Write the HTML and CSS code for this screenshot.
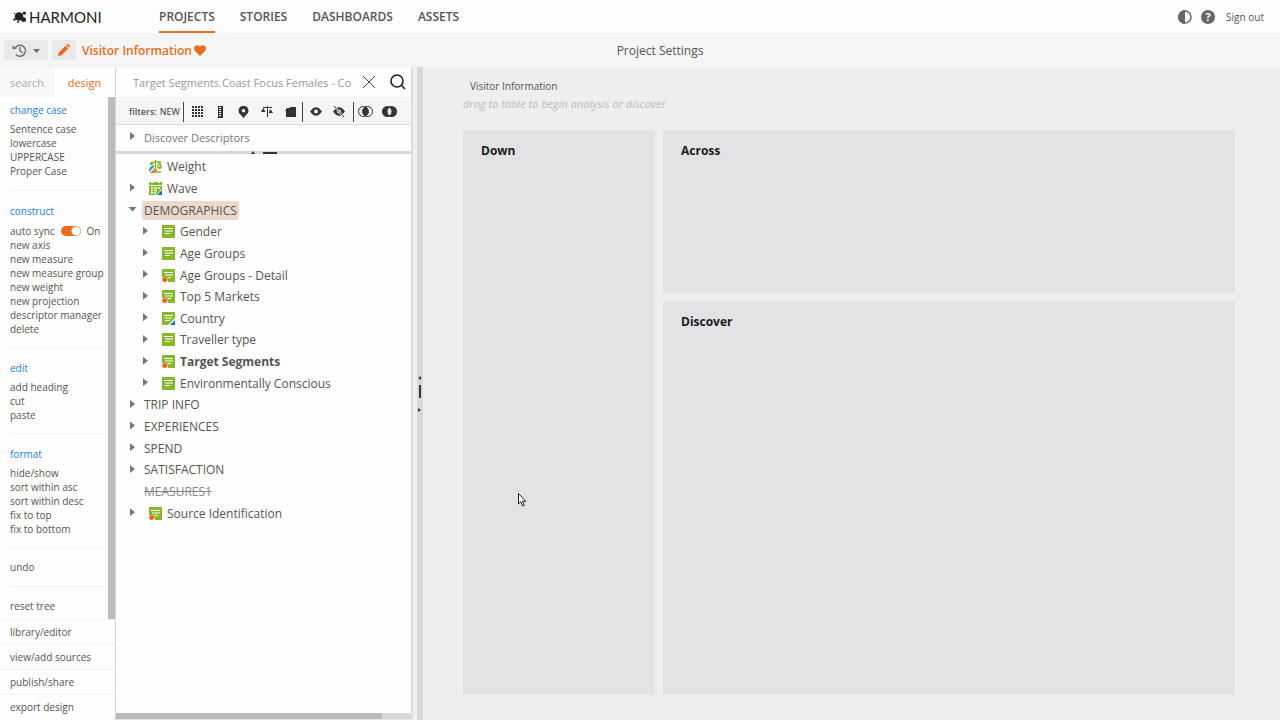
FILE: index.html
```
<!DOCTYPE html>
<html lang="en">
<head>
  <meta charset="UTF-8">
  <meta name="viewport" content="width=device-width, initial-scale=1">
  <title>Harmoni - Project Settings</title>
  <link rel="stylesheet" href="styles.css">
</head>
<body>
  <!-- icons shared by the tree -->
  <svg class="defs" aria-hidden="true">
    <symbol id="axis" viewBox="0 0 13 13">
      <rect width="13" height="13" fill="#86b82c"/>
      <path d="M2 3.500h9M3 6h8M3 8.500h5" stroke="#fff"/>
    </symbol>
    <symbol id="axis-dot" viewBox="0 0 13 13">
      <path d="M0 0h13v13H6L5 8 0 8z" fill="#86b82c"/>
      <path d="M2 3.500h9M3 6h8M6 8.500h3" stroke="#fff"/>
      <circle cx="2.700" cy="10.500" r="2.500" fill="#ee6a16"/>
    </symbol>
    <symbol id="axis-tri" viewBox="0 0 13 13">
      <path d="M0 0h13v6L6 13H0z" fill="#86b82c"/>
      <path d="M2 3.500h9M3 6h7M3 8.500h5" stroke="#fff"/>
      <path d="M13 8v5H8z" fill="#1673c5"/>
    </symbol>
    <symbol id="wave" viewBox="0 0 13 13">
      <path d="M0 0h2v1h2V0h5v1h2V0h2v3H0zM0 4h13v3l-6 6H0z" fill="#86b82c"/>
      <path d="M2 6h2M5 6h3M9 6h2M2 8.500h2M5 8.500h3M2 11h2M5 11h2" stroke="#fff" stroke-width="1.300"/>
      <path d="M13 8v5H8z" fill="#1673c5"/>
    </symbol>
    <symbol id="weight" viewBox="0 0 13 13">
      <path d="M1 3l5.500-1L12 2M6.500 0v10M7 12h5M10.500 2.500L8.500 7M10.500 2.500l2 4.500" fill="none" stroke="#86b82c" stroke-width="1.400"/>
      <path d="M8 6.500h5q-.5 2.500-2.500 2.500T8 6.500zM1 3h3v2H1z" fill="#86b82c"/>
      <path d="M0 9q1-3 5-4v2l-5 5z" fill="#2ba5cf"/>
      <path d="M1 13l5-5v2l-2 3zM4 13l4-4v2l-2 2z" fill="#ee6a16"/>
    </symbol>
  </svg>

  <header class="header">
    <a class="logo" href="#">
      <svg width="14" height="12" viewBox="0 0 14 12" fill="#222" aria-hidden="true">
        <circle cx="6" cy="5.500" r="4.300"/>
        <circle cx="1.500" cy="8.500" r="1.200"/>
        <circle cx="11.300" cy="2.200" r="1.600"/>
        <circle cx="10.700" cy="8.700" r="2.400"/>
        <circle cx="5" cy="11" r="1"/>
        <circle cx="1.500" cy="2.500" r=".7"/>
      </svg>
      <span>HARMONI</span>
    </a>
    <nav class="nav">
      <a class="active" href="#">PROJECTS</a>
      <a href="#">STORIES</a>
      <a href="#">DASHBOARDS</a>
      <a href="#">ASSETS</a>
    </nav>
    <div class="account">
      <button type="button" aria-label="Contrast">
        <svg width="14" height="14" viewBox="0 0 14 14"><circle cx="7" cy="7" r="6" fill="#fff" stroke="#666" stroke-width="1.500"/><path d="M7 0a7 7 0 0 0 0 14z" fill="#666"/></svg>
      </button>
      <button class="help" type="button" aria-label="Help">?</button>
      <a href="#">Sign out</a>
    </div>
  </header>

  <div class="toolbar">
    <div class="toolbar-left">
      <button class="history" type="button" aria-label="History">
        <svg width="28" height="15" viewBox="0 0 28 15" fill="none" stroke="#707070" stroke-width="1.400">
          <path d="M3 5.500A5.500 5.500 0 1 1 4 11.500M8 4v4l3 2"/>
          <path d="M0 2.500l1 4 4-1z" fill="#707070" stroke="none"/>
          <path d="M21 6h7l-3.500 4z" fill="#707070" stroke="none"/>
        </svg>
      </button>
      <button class="edit" type="button" aria-label="Edit">
        <svg width="12" height="12" viewBox="0 0 12 12" fill="#ea6c1e"><path d="M0 12l.8-3.600 6.700-6.700 2.800 2.800-6.700 6.700zM8.300 1L9.300 0h.8L12 1.900v.8l-1 1z"/></svg>
      </button>
      <h1>Visitor Information</h1>
      <svg width="12" height="11" viewBox="0 0 12 11" fill="#ea6c1e" aria-hidden="true"><path d="M6 11L1 6C-2 2.500 2.500-2 6 1.700 9.500-2 14 2.500 11 6z"/></svg>
    </div>
    <span class="toolbar-title">Project Settings</span>
  </div>

  <div class="workspace">
    <aside class="sidebar">
      <div class="tabs">
        <button type="button">search</button>
        <button class="active" type="button">design</button>
      </div>
      <div class="actions">
        <div class="sections">
          <section>
            <h2>change case</h2>
            <button type="button">Sentence case</button>
            <button type="button">lowercase</button>
            <button type="button">UPPERCASE</button>
            <button type="button">Proper Case</button>
          </section>
          <section>
            <h2>construct</h2>
            <label class="switch">auto sync <input type="checkbox" checked> <span>On</span></label>
            <button type="button">new axis</button>
            <button type="button">new measure</button>
            <button type="button">new measure group</button>
            <button type="button">new weight</button>
            <button type="button">new projection</button>
            <button type="button">descriptor manager</button>
            <button type="button">delete</button>
          </section>
          <section>
            <h2>edit</h2>
            <button type="button">add heading</button>
            <button type="button">cut</button>
            <button type="button">paste</button>
          </section>
          <section>
            <h2>format</h2>
            <button type="button">hide/show</button>
            <button type="button">sort within asc</button>
            <button type="button">sort within desc</button>
            <button type="button">fix to top</button>
            <button type="button">fix to bottom</button>
          </section>
          <section>
            <button type="button">undo</button>
          </section>
          <section>
            <button type="button">reset tree</button>
          </section>
        </div>
        <div class="scroll-v"></div>
      </div>
      <div class="links">
        <a href="#">library/editor</a>
        <a href="#">view/add sources</a>
        <a href="#">publish/share</a>
        <a href="#">export design</a>
      </div>
    </aside>

    <section class="explorer">
      <div class="search">
        <input type="text" aria-label="Search" value="Target Segments.Coast Focus Females - Coast Focus">
        <button type="button" aria-label="Clear">
          <svg width="14" height="14" viewBox="0 0 14 14" stroke="#444"><path d="M1 1l12 12M13 1L1 13"/></svg>
        </button>
        <button type="button" aria-label="Search">
          <svg width="16" height="16" viewBox="0 0 16 16" fill="none" stroke="#222" stroke-width="1.600"><circle cx="7" cy="7" r="6"/><path d="M11.300 11.300L15 15"/></svg>
        </button>
      </div>

      <div class="filters">
        <span class="filters-label">filters:</span>
        <button class="new" type="button">NEW</button>
        <div class="group types">
          <button type="button" aria-label="Grid">
            <svg width="11" height="11" viewBox="0 0 11 11" stroke="#333" stroke-width="2" stroke-dasharray="2 1"><path d="M0 1h11M0 4h11M0 7h11M0 10h11"/></svg>
          </button>
          <button type="button" aria-label="Measures">
            <svg width="11" height="12" viewBox="0 0 11 12"><path d="M3 0h5v12H3z" fill="#333"/><path d="M4 1.500h2M4 3.500h2M4 5.500h2M4 7.500h2M4 9.500h2" stroke="#fff"/></svg>
          </button>
          <button type="button" aria-label="Location">
            <svg width="11" height="12" viewBox="0 0 11 12"><path d="M5.500 0a4.700 4.700 0 0 1 3 8.500L5.500 12l-3-3.500A4.700 4.700 0 0 1 5.500 0z" fill="#333"/><circle cx="5.500" cy="4.700" r="1.700" fill="#f5f5f6"/></svg>
          </button>
          <button type="button" aria-label="Weights">
            <svg width="12" height="11" viewBox="0 0 12 11" fill="#333"><path d="M2 1.500h9M6.500 0v11" stroke="#333"/><path d="M0 6l2.300-4L4.500 6zM7.500 7l2-4L12 7z"/></svg>
          </button>
          <button type="button" aria-label="Projections">
            <svg width="11" height="12" viewBox="0 0 11 12" fill="#333"><path d="M1 11V5H0l2-3h3V1h6v10z"/></svg>
          </button>
        </div>
        <div class="group eyes">
          <button type="button" aria-label="Visible">
            <svg width="12" height="9" viewBox="0 0 12 9"><path d="M0 4.500Q6-4 12 4.500 6 13 0 4.500z" fill="#333"/><circle cx="6" cy="4.500" r="2" fill="#f5f5f6"/></svg>
          </button>
          <button type="button" aria-label="Hidden">
            <svg width="12" height="11" viewBox="0 0 12 11"><path d="M0 5.500Q6-3 12 5.500 6 14 0 5.500z" fill="#333"/><circle cx="6" cy="5.500" r="2" fill="#f5f5f6"/><path d="M1 0l10 11" stroke="#f5f5f6" stroke-width="2"/><path d="M1 0l10 11" stroke="#333"/></svg>
          </button>
        </div>
        <div class="group venn">
          <button type="button" aria-label="Intersection">
            <svg width="15" height="11" viewBox="0 0 15 11"><g fill="none" stroke="#333"><circle cx="5.500" cy="5.500" r="5"/><circle cx="9.500" cy="5.500" r="5"/></g><path d="M7.500 1a5 5 0 0 1 0 9 5 5 0 0 1 0-9z" fill="#333"/></svg>
          </button>
          <button type="button" aria-label="Exclusion">
            <svg width="15" height="11" viewBox="0 0 15 11"><circle cx="5.500" cy="5.500" r="5.500" fill="#333"/><circle cx="9.500" cy="5.500" r="5.500" fill="#333"/><path d="M7.500 1.500a5 5 0 0 1 0 8 5 5 0 0 1 0-8z" fill="#f5f5f6"/></svg>
          </button>
        </div>
      </div>

      <div class="descriptors">
        <div class="node"><button class="arrow" type="button" aria-label="Expand"></button><span>Discover Descriptors</span></div>
      </div>
      <div class="split-h">
        <svg width="26" height="3" viewBox="0 0 26 3" fill="#333" aria-hidden="true"><path d="M0 3l2-3 2 3zM12 1h14v2H12z"/></svg>
      </div>

      <ul class="tree">
        <li class="node leaf"><svg><use href="#weight"/></svg><span>Weight</span></li>
        <li class="node"><button class="arrow" type="button" aria-label="Expand"></button><svg><use href="#wave"/></svg><span>Wave</span></li>
        <li class="node"><button class="arrow open" type="button" aria-label="Collapse"></button><span class="selected">DEMOGRAPHICS</span></li>
        <li class="node child"><button class="arrow" type="button" aria-label="Expand"></button><svg><use href="#axis"/></svg><span>Gender</span></li>
        <li class="node child"><button class="arrow" type="button" aria-label="Expand"></button><svg><use href="#axis"/></svg><span>Age Groups</span></li>
        <li class="node child"><button class="arrow" type="button" aria-label="Expand"></button><svg><use href="#axis-dot"/></svg><span>Age Groups - Detail</span></li>
        <li class="node child"><button class="arrow" type="button" aria-label="Expand"></button><svg><use href="#axis-dot"/></svg><span>Top 5 Markets</span></li>
        <li class="node child"><button class="arrow" type="button" aria-label="Expand"></button><svg><use href="#axis-tri"/></svg><span>Country</span></li>
        <li class="node child"><button class="arrow" type="button" aria-label="Expand"></button><svg><use href="#axis"/></svg><span>Traveller type</span></li>
        <li class="node child"><button class="arrow" type="button" aria-label="Expand"></button><svg><use href="#axis-dot"/></svg><span class="bold">Target Segments</span></li>
        <li class="node child"><button class="arrow" type="button" aria-label="Expand"></button><svg><use href="#axis"/></svg><span>Environmentally Conscious</span></li>
        <li class="node"><button class="arrow" type="button" aria-label="Expand"></button><span>TRIP INFO</span></li>
        <li class="node"><button class="arrow" type="button" aria-label="Expand"></button><span>EXPERIENCES</span></li>
        <li class="node"><button class="arrow" type="button" aria-label="Expand"></button><span>SPEND</span></li>
        <li class="node"><button class="arrow" type="button" aria-label="Expand"></button><span>SATISFACTION</span></li>
        <li class="node leaf"><span class="hidden-item">MEASURES1</span></li>
        <li class="node"><button class="arrow" type="button" aria-label="Expand"></button><svg><use href="#axis-dot"/></svg><span>Source Identification</span></li>
      </ul>
      <div class="scroll-h"><div></div></div>
    </section>

    <div class="split-v">
      <svg width="4" height="36" viewBox="0 0 4 36" fill="#333" aria-hidden="true"><path d="M4 0v4L1 2zM2 9h2v13H2zM1 32v4l3-2z"/></svg>
    </div>

    <main class="canvas">
      <h2>Visitor Information</h2>
      <p>drag to table to begin analysis or discover</p>
      <div class="drops">
        <section class="down"><h3>Down</h3></section>
        <section><h3>Across</h3></section>
        <section><h3>Discover</h3></section>
      </div>
    </main>
  </div>

  <svg class="cursor" width="9" height="14" viewBox="0 0 9 14" aria-hidden="true"><path d="M.5.5v10.500l2.300-2.200 1.800 4.200 1.700-.8-1.800-3.900h3.200z" fill="#fff" stroke="#222"/></svg>
</body>
</html>
```
FILE: styles.css
```
* {
  box-sizing: border-box;
}

body {
  margin: 0;
  min-height: 100vh;
  display: flex;
  flex-direction: column;
  background: #eeeeef;
  color: #555;
  font-family: 'Open Sans', 'Noto Sans', sans-serif;
  font-size: 12px;
}

h1, h2, h3, p, ul {
  margin: 0;
  padding: 0;
}

a {
  color: inherit;
  text-decoration: none;
}

button {
  border: 0;
  padding: 0;
  background: none;
  color: inherit;
  font: inherit;
  cursor: pointer;
}

svg {
  display: block;
  flex: none;
}

.defs {
  position: absolute;
  width: 0;
  height: 0;
}

/* header */
.header {
  display: flex;
  height: 33px;
  padding: 0 16px 0 13px;
  background: #fefefe;
}

.logo {
  display: flex;
  align-items: center;
  gap: 2px;
  width: 146px;
  color: #222;
  font-family: Lato, sans-serif;
  font-size: 15px;
}

.nav {
  display: flex;
  gap: 25px;
  font-weight: 600;
}

.nav a {
  line-height: 33px;
}

.nav .active {
  border-bottom: 2px solid #ea6c1e;
}

.account {
  display: flex;
  align-items: center;
  gap: 9px;
  margin-left: auto;
  font-size: 10px;
  font-weight: 500;
}

.help {
  width: 14px;
  height: 14px;
  border-radius: 50%;
  background: #666;
  color: #fff;
  font-size: 11px;
  font-weight: 700;
  line-height: 14px;
}

.account a {
  margin-left: 2px;
}

/* toolbar */
.toolbar {
  display: grid;
  grid-template-columns: 1fr auto 1fr;
  align-items: center;
  height: 34px;
  padding-left: 4px;
  background: #f5f5f6;
}

.toolbar-left {
  display: flex;
  align-items: center;
}

.history,
.edit {
  display: flex;
  align-items: center;
  justify-content: center;
  height: 20px;
  background: #e9e9ea;
}

.history {
  width: 44px;
}

.edit {
  width: 24px;
  margin: 0 6px 0 4px;
}

.toolbar h1 {
  margin-right: 2px;
  color: #ea6c1e;
  font-size: 12px;
  font-weight: 600;
}

.toolbar-title {
  padding-left: 36px;
  font-weight: 500;
}

.workspace {
  display: flex;
  flex: 1;
}

/* sidebar */
.sidebar {
  display: flex;
  flex-direction: column;
  width: 116px;
  border-right: 1px solid #d5d5d8;
  background: #fefefe;
  font-size: 10px;
}

.tabs {
  display: flex;
  height: 30px;
  font-size: 11px;
}

.tabs button {
  width: 54px;
  background: #f8f8fa;
  color: #aaa;
}

.tabs .active {
  flex: 1;
  background: none;
  color: #ea6c1e;
}

.actions {
  display: flex;
}

.sections {
  flex: 1;
}

.sections section {
  display: flex;
  flex-direction: column;
  align-items: flex-start;
  margin: 0 4px 0 10px;
  padding: 12px 0;
  border-top: 1px solid #f0f0f6;
  line-height: 14px;
  white-space: nowrap;
}

.sections section:has(h2) {
  padding-bottom: 11px;
}

.sections section:first-child {
  border-top: 0;
  padding: 5px 0 12px;
}

.sections section:last-child {
  padding-bottom: 6px;
}

.sections h2 {
  margin-bottom: 4px;
  color: #1a80e0;
  font-size: 10px;
  font-weight: 400;
  line-height: 16px;
}

.switch {
  display: flex;
  align-items: center;
  height: 15px;
}

.switch input {
  appearance: none;
  width: 20px;
  height: 10px;
  margin: 0 6px;
  border-radius: 5px;
  background: radial-gradient(circle at 15px 5px, #fff 4px, #ea6c1e 5px);
}

.scroll-v {
  width: 8px;
  background: #bcbcbd;
}

.links a {
  display: block;
  padding-left: 10px;
  border-top: 1px solid #f0f0f6;
  line-height: 24px;
}

/* tree explorer */
.explorer {
  display: flex;
  flex-direction: column;
  width: 297px;
  border-right: 2px solid #dedee1;
  background: #fefefe;
}

.search {
  display: flex;
  align-items: center;
  gap: 14px;
  height: 30px;
  padding: 0 5px 0 17px;
}

.search input {
  flex: 1;
  min-width: 0;
  margin-right: -4px;
  padding: 0;
  border: 0;
  outline: 0;
  background: none;
  color: #999;
  font: inherit;
  font-size: 11px;
}

.filters {
  display: flex;
  align-items: center;
  height: 28px;
  padding: 2px 0 0 13px;
  border-bottom: 1px solid #d8d8dc;
  background: #f5f5f6;
  font-size: 9px;
}

.filters-label {
  font-weight: 600;
}

.filters .new {
  margin: 0 3px;
  color: #333;
}

.group {
  display: flex;
  align-items: center;
  height: 20px;
  padding: 0 6px 0 8px;
  border-left: 1px solid #444;
}

.types {
  gap: 12px;
}

.eyes {
  gap: 11px;
  padding: 0 8px 0 7px;
}

.venn {
  gap: 9px;
  padding: 0 0 0 4px;
}

.node {
  display: flex;
  align-items: center;
  gap: 5px;
  padding-left: 14px;
  white-space: nowrap;
}

.descriptors {
  height: 26px;
  color: #777;
  font-size: 11px;
}

.descriptors .node {
  height: 24px;
}

.arrow {
  width: 5px;
  height: 8px;
  margin: 0 4px 2px 0;
  background: #777;
  clip-path: polygon(0 0, 100% 50%, 0 100%);
}

.arrow.open {
  width: 9px;
  height: 5px;
  margin: 0 2px 2px -2px;
  clip-path: polygon(0 0, 100% 0, 50% 100%);
}

.node svg {
  width: 13px;
  height: 13px;
}

.arrow + svg,
.leaf svg {
  margin-left: 5px;
}

.split-h {
  display: flex;
  justify-content: center;
  height: 3px;
  background: #d9d9dd;
}

.tree {
  display: grid;
  grid-auto-rows: 1fr;
  min-height: 368px;
  margin-top: 2px;
  list-style: none;
}

.child {
  padding-left: 27px;
}

.leaf {
  padding-left: 28px;
}

.selected {
  margin: 0 -2px;
  padding: 1px 2px;
  border-radius: 2px;
  background: #ecd9ce;
}

.bold {
  font-weight: 700;
}

.hidden-item {
  color: #888;
  text-decoration: line-through;
}

.scroll-h {
  height: 7px;
  margin-top: auto;
  border-bottom: 1px solid #e4e4e6;
  background: #d9d9da;
}

.scroll-h div {
  width: 90%;
  height: 6px;
  background: #bababb;
}

.split-v {
  display: flex;
  align-items: center;
  width: 10px;
  border-left: 4px solid #f0f0f1;
  background: #d9d9dd;
}

/* canvas */
.canvas {
  display: flex;
  flex: 1;
  flex-direction: column;
  padding: 10px 45px 25px 40px;
}

.canvas h2 {
  padding-left: 7px;
  font-size: 10px;
  font-weight: 400;
  line-height: 18px;
}

.canvas p {
  margin-bottom: 17px;
  color: #bbb;
  font-size: 11px;
  font-style: italic;
  line-height: 18px;
}

.drops {
  display: grid;
  flex: 1;
  grid-template-columns: 192px 1fr;
  grid-template-rows: 163px 1fr;
  gap: 8px;
}

.drops section {
  padding: 12px 18px;
  background: #e3e2e5;
}

.drops .down {
  grid-row: span 2;
}

.drops h3 {
  color: #1a1a1a;
  font-size: 12px;
  font-weight: 700;
  line-height: 18px;
}

.cursor {
  position: absolute;
  left: 518px;
  top: 493px;
}
```
